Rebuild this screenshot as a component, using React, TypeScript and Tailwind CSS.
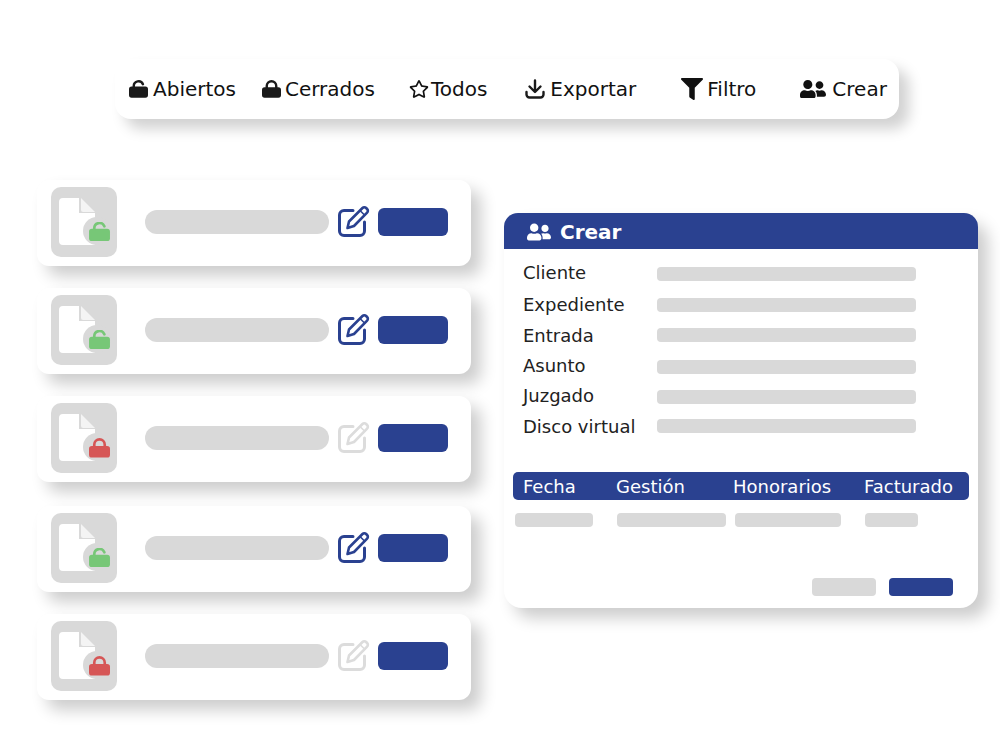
import { FaRegStar, FaFilter, FaUserFriends } from "react-icons/fa";

const cards = [
    { open: true, edit: true, top: "" },
    { open: true, edit: true, top: "mt-[22px]" },
    { open: false, edit: false, top: "mt-[22px]" },
    { open: true, edit: true, top: "mt-[24px]" },
    { open: false, edit: false, top: "mt-[22px]" },
];

const fields = [
    { label: "Cliente", top: "mt-[14px]", pad: "pb-[2px]" },
    { label: "Expediente", top: "mt-[9px]", pad: "" },
    { label: "Entrada", top: "mt-[8px]", pad: "pt-[2px]" },
    { label: "Asunto", top: "mt-[10px]", pad: "pb-[2px]" },
    { label: "Juzgado", top: "mt-[8px]", pad: "pb-[2px]" },
    { label: "Disco virtual", top: "mt-[7px]", pad: "pt-[2px]" },
];

const LockOpen = ({ className }: { className: string }) => (
    <svg viewBox="0 0 22 20" className={className} fill="currentColor">
        <rect x="0" y="7" width="22" height="13" rx="3" />
        <path d="M5.5 8V6.5a5.5 5.5 0 0 1 10.6-2" fill="none" stroke="currentColor" strokeWidth="2.8" strokeLinecap="round" />
    </svg>
);

const LockClosed = ({ className }: { className: string }) => (
    <svg viewBox="0 0 22 20" className={className} fill="currentColor">
        <rect x="0" y="8" width="22" height="12" rx="3" />
        <path d="M5.5 9V6.5a5.5 5.5 0 0 1 11 0V9" fill="none" stroke="currentColor" strokeWidth="2.8" />
    </svg>
);

const EditIcon = ({ className }: { className: string }) => (
    <svg viewBox="0 0 32 32" className={className} fill="none" stroke="currentColor" strokeLinecap="round" strokeLinejoin="round">
        <path d="M15 5.5H6a4.5 4.5 0 0 0-4.5 4.5v16A4.5 4.5 0 0 0 6 30.5h16a4.5 4.5 0 0 0 4.5-4.5V17" strokeWidth="3" />
        <path d="M9.5 23l1.5-6.5L24.5 3a2.5 2.5 0 0 1 3.6 0l1 1a2.5 2.5 0 0 1 0 3.6L16 21z" strokeWidth="2.6" />
        <path d="M22 5.5l4.5 4.5" strokeWidth="1.6" />
    </svg>
);

const DownloadIcon = ({ className }: { className: string }) => (
    <svg viewBox="0 0 20 20" className={className} fill="none" stroke="currentColor" strokeWidth="2.4" strokeLinecap="round" strokeLinejoin="round">
        <path d="M10 1.5V12.5M4.5 7.5L10 13l5.5-5.5" />
        <path d="M1.5 13v2.5a3 3 0 0 0 3 3h11a3 3 0 0 0 3-3V13" />
    </svg>
);

const FileTile = ({ open }: { open: boolean }) => {
    return (
        <div className="relative w-[66px] h-[70px] rounded-[10px] bg-[#d9d9d9] shrink-0">
            <svg width="66" height="70" viewBox="0 0 66 70" className="block">
                <path d="M12 11h16v15h16v32H12a4 4 0 0 1-4-4V15a4 4 0 0 1 4-4z" fill="#ffffff" />
                <path d="M30 11l14 14H32a2 2 0 0 1-2-2z" fill="#f4f4f4" />
                <circle cx="46" cy="44" r="14" fill="#d9d9d9" />
            </svg>
            {open ? (
                <LockOpen className="absolute left-[38px] top-[35px] w-[21px] h-[19px] text-[#77c777]" />
            ) : (
                <LockClosed className="absolute left-[38px] top-[35px] w-[21px] h-[20px] text-[#d65656]" />
            )}
        </div>
    );
};

const Card = ({ open, edit, top }: { open: boolean; edit: boolean; top: string }) => {
    return (
        <div className={`flex items-center w-[434px] h-[86px] pl-[14px] pb-[2px] rounded-[12px] bg-white shadow-[10px_10px_16px_rgba(0,0,0,0.2)] ${top}`}>
            <FileTile open={open} />
            <div className="ml-[28px] w-[184px] h-[24px] rounded-full bg-[#d9d9d9]" />
            <EditIcon className={`ml-[9px] mb-[2px] w-[32px] h-[32px] shrink-0 ${edit ? "text-[#2a4190]" : "text-[#dcdcdc]"}`} />
            <div className="ml-[8px] w-[70px] h-[28px] rounded-[6px] bg-[#2a4190]" />
        </div>
    );
};

export default function App() {
    return (
        <div className="w-[1000px] h-[750px] overflow-hidden bg-white text-[#111111] font-['DejaVu_Sans',sans-serif]">
            <div className="pt-[59px] pl-[115px]">
                <div className="flex items-center w-[784px] h-[60px] rounded-[16px] bg-white text-[20px] shadow-[10px_10px_14px_rgba(0,0,0,0.18)]">
                    <LockOpen className="ml-[14px] w-[19px] h-[18px] shrink-0 text-[#1a1a1a]" />
                    <span className="ml-[5px]">Abiertos</span>
                    <LockClosed className="ml-[26px] w-[19px] h-[18px] shrink-0 text-[#1a1a1a]" />
                    <span className="ml-[4px]">Cerrados</span>
                    <FaRegStar className="ml-[34px] shrink-0" size={20} />
                    <span className="ml-[2px]">Todos</span>
                    <DownloadIcon className="ml-[38px] w-[20px] h-[20px] shrink-0 text-[#1a1a1a]" />
                    <span className="ml-[5px]">Exportar</span>
                    <FaFilter className="ml-[45px] shrink-0" size={22} />
                    <span className="ml-[4px]">Filtro</span>
                    <FaUserFriends className="ml-[44px] shrink-0" size={26} />
                    <span className="ml-[6px]">Crear</span>
                </div>
            </div>

            <div className="flex items-start pl-[37px] pt-[61px]">
                <div className="flex flex-col">
                    {cards.map((c, i) => (
                        <Card key={i} open={c.open} edit={c.edit} top={c.top} />
                    ))}
                </div>

                <div className="ml-[33px] mt-[33px] w-[474px] h-[395px] rounded-[18px] bg-white shadow-[10px_10px_16px_rgba(0,0,0,0.2)]">
                    <div className="flex items-center h-[36px] pl-[23px] pt-[2px] rounded-t-[14px] bg-[#2a4190] text-white text-[20px] font-bold">
                        <FaUserFriends size={24} />
                        <span className="ml-[9px]">Crear</span>
                    </div>

                    <div className="pl-[19px] pb-[35px]">
                        {fields.map((f) => (
                            <div key={f.label} className={`flex items-center h-[22px] ${f.top}`}>
                                <span className={`w-[134px] text-[18px] leading-[22px] text-[#222222] ${f.pad}`}>{f.label}</span>
                                <div className="w-[259px] h-[14px] rounded-[4px] bg-[#d9d9d9]" />
                            </div>
                        ))}
                    </div>

                    <div className="flex items-center ml-[9px] w-[456px] h-[28px] rounded-[5px] bg-[#2a4190] text-white text-[18px]">
                        <span className="ml-[10px] w-[93px]">Fecha</span>
                        <span className="w-[117px]">Gestión</span>
                        <span className="w-[131px]">Honorarios</span>
                        <span>Facturado</span>
                    </div>

                    <div className="flex mt-[13px] ml-[11px]">
                        <div className="w-[78px] h-[14px] rounded-[4px] bg-[#d9d9d9]" />
                        <div className="ml-[24px] w-[109px] h-[14px] rounded-[4px] bg-[#d9d9d9]" />
                        <div className="ml-[9px] w-[106px] h-[14px] rounded-[4px] bg-[#d9d9d9]" />
                        <div className="ml-[24px] w-[53px] h-[14px] rounded-[4px] bg-[#d9d9d9]" />
                    </div>

                    <div className="flex justify-end mt-[51px] mr-[25px] gap-[13px]">
                        <div className="w-[64px] h-[18px] rounded-[4px] bg-[#d9d9d9]" />
                        <div className="w-[64px] h-[18px] rounded-[4px] bg-[#2a4190]" />
                    </div>
                </div>
            </div>
        </div>
    );
}
